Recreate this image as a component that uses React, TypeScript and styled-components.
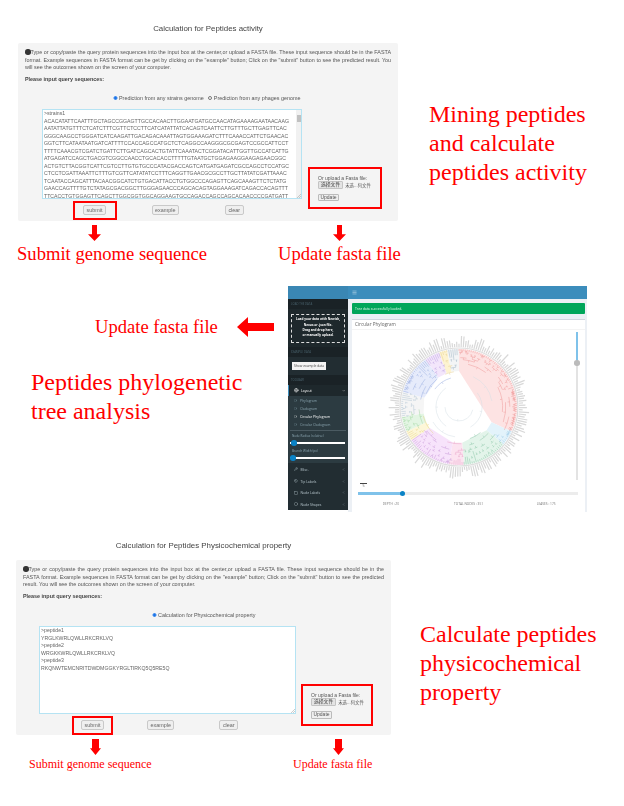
import styled, { createGlobalStyle } from 'styled-components';
import { Circle, Globe, Menu, Square, Tags, Wrench, ChevronDown, ChevronLeft } from 'lucide-react';

const GlobalStyle = createGlobalStyle`
  html, body {
    margin: 0;
    background: #fff;
  }
  * {
    box-sizing: border-box;
  }
`;

const SANS = `"Liberation Sans", "Noto Sans CJK SC", Arial, sans-serif`;
const SERIF = `"Liberation Serif", "Times New Roman", serif`;

const STRAINS = `>strains1
ACACATATTCAATTTGCTAGCCGGAGTTGCCACAACTTGGAATGATGCCAACATAGAAAAGAATAACAAG
AATATTATGTTTCTCATCTTTCGTTCTCCTTCATCATATTATCACAGTCAATTCTTGTTTGCTTGAGTTCAC
GGGCAAGCCTGGGATCATCAAGATTGACAGACAAATTAGTGGAAAGATCTTTCAAACCATTCTGAACAC
GGTCTTCATAATAATGATCATTTTCCACCAGCCATGCTCTCAGGCCAAGGGCGCGAGTCCGCCATTCCT
TTTTCAAACGTCGATCTGATTCTTGATCAGCACTGTATTCAAATACTCGGATACATTGGTTGCCATCATTG
ATGAGATCCAGCTGACGTCGGCCAACCTGCACACCTTTTTGTAATGCTGGAGAAGGAAGAGAACGGC
ACTGTCTTACGGTCATTCGTCCTTGTGTGCCCATACGACCAGTCATGATGAGATCGCCAGCCTCCATGC
CTCCTCGATTAAATTCTTTGTCGTTCATATATCCTTTCAGGTTGAACGCGCCTTGCTTATATCGATTAAAC
TCAATACCAGCATTTACAACGGCATCTGTGACATTACCTGTGGCCCAGAGTTCAGCAAAGTTCTCTATG
GAACCAGTTTTGTCTATAGCGACGGCTTGGGAGAACCCAGCACAGTAGGAAAGATCAGACCACAGTTT
TTCACCTGTGGAGTTCAGCTTGGCGGTGGCAGGAAGTGCCAGACCAGCCAGCACAACCCCGATGATT`;

const PEPTIDES = `>peptide1
YRGLKWRLQWLLRKCRKLVQ
>peptide2
WRGKKWRLQWLLRKCRKLVQ
>peptide3
RKQNWTEMCNRITDWDMGGKYRGLTIRKQ5Q5RE5Q`;

const Page = styled.div`
  width: 624px;
  height: 806px;
  overflow: hidden;
  display: flex;
  flex-direction: column;
`;

const Row = styled.section<{ $top: number; $height: number }>`
  display: flex;
  flex: none;
  margin-top: ${(p) => p.$top}px;
  height: ${(p) => p.$height}px;
`;

const Column = styled.div<{ $left: number; $width: number }>`
  margin-left: ${(p) => p.$left}px;
  width: ${(p) => p.$width}px;
  flex: none;
`;

const Title = styled.h3`
  margin: 0 0 7px;
  height: 14px;
  text-align: center;
  font: 400 7.9px/14px ${SANS};
  color: #444;
  filter: blur(0.25px);
`;

const Panel = styled.div<{ $height: number }>`
  height: ${(p) => p.$height}px;
  background: #f4f4f4;
  border-radius: 2px;
  padding: 6px 7px 0;
  font-family: ${SANS};
  color: #555;
  filter: blur(0.25px);
`;

const Intro = styled.p`
  margin: 0;
  font-size: 5.4px;
  line-height: 7.6px;
  text-align: justify;
`;

const InfoDot = styled.span`
  display: inline-block;
  width: 5.5px;
  height: 5.5px;
  border-radius: 50%;
  background: #333;
  vertical-align: -0.5px;
`;

const QueryLabel = styled.p`
  margin: 3.5px 0 0;
  font-size: 5.4px;
  line-height: 8px;
  font-weight: 700;
  color: #444;
`;

const Radios = styled.div<{ $left: number }>`
  display: flex;
  align-items: center;
  gap: 4px;
  height: 8px;
  margin: 10.5px 0 7.5px ${(p) => p.$left}px;
  font-size: 5.4px;
`;

const RadioOption = styled.label`
  display: flex;
  align-items: center;
  gap: 1.5px;

  input {
    margin: 0;
    width: 4.5px;
    height: 4.5px;
    accent-color: #1a73e8;
  }
`;

const WorkArea = styled.div`
  display: flex;
  align-items: flex-start;
`;

const InputColumn = styled.div<{ $indent: number; $width: number }>`
  margin-left: ${(p) => p.$indent}px;
  width: ${(p) => p.$width}px;
  flex: none;
`;

const SequenceBox = styled.div<{ $height: number }>`
  position: relative;
  height: ${(p) => p.$height}px;
  overflow: hidden;
  background: #fff;
  border: 1px solid #b5e3f3;
  padding: 0 0 0 1px;
  font-size: 5.2px;
  line-height: 7.5px;
  white-space: pre;
  color: #666;
`;

const ScrollTrack = styled.div`
  position: absolute;
  top: 0;
  right: 0;
  bottom: 0;
  width: 5px;
  background: #f1f1f1;

  &::before {
    content: '';
    position: absolute;
    top: 5px;
    left: 0.5px;
    width: 4px;
    height: 7px;
    background: #c1c1c1;
  }
`;

const Grip = styled.svg`
  position: absolute;
  right: 0;
  bottom: 0;
`;

const ButtonRow = styled.div<{ $indent: number }>`
  display: flex;
  align-items: center;
  height: 19px;
  margin: 1.5px 0 0 ${(p) => p.$indent}px;
`;

const Highlight = styled.div<{ $width: number }>`
  width: ${(p) => p.$width}px;
  height: 19px;
  border: 2px solid #f00;
  display: flex;
  align-items: center;
  justify-content: center;
`;

const FormButton = styled.button<{ $left?: number }>`
  margin: 0 0 0 ${(p) => p.$left ?? 0}px;
  height: 10px;
  padding: 0 2.5px;
  font: 400 5.4px/8px ${SANS};
  color: #666;
  background: #efefef;
  border: 1px solid #c9c9c9;
  border-radius: 2px;
`;

const UploadBox = styled.div<{ $top: number; $left: number; $width: number }>`
  margin: ${(p) => p.$top}px 0 0 ${(p) => p.$left}px;
  width: ${(p) => p.$width}px;
  height: 42px;
  flex: none;
  border: 2px solid #f00;
  padding: 6px 0 0 8px;
  font-size: 5px;
  color: #555;
`;

const UploadCaption = styled.div`
  line-height: 6px;
`;

const FileLine = styled.div`
  display: flex;
  align-items: center;
  gap: 2px;
  height: 8px;
  margin: 0 0 5px;
  font-size: 4.4px;
`;

const FileButton = styled.span`
  height: 8px;
  padding: 0 2px;
  font-size: 4.8px;
  line-height: 6px;
  background: #e4e4e4;
  border: 1px solid #c4c4c4;
  border-radius: 1px;
  color: #333;
`;

const UpdateButton = styled.span`
  display: block;
  width: 21px;
  height: 7.5px;
  line-height: 5.6px;
  text-align: center;
  background: #efefef;
  border: 1px solid #bbb;
  border-radius: 1px;
`;

const Callouts = styled.div`
  position: relative;
  height: 46px;
`;

const Callout = styled.div<{ $x: number; $size: number; $arrowX: number; $pad: number }>`
  position: absolute;
  top: 0;
  left: ${(p) => p.$x}px;
  padding-top: ${(p) => p.$pad}px;
  font: 400 ${(p) => p.$size}px/20px ${SERIF};
  color: #f00;
  white-space: nowrap;

  svg {
    position: absolute;
    top: 3.5px;
    left: ${(p) => p.$arrowX}px;
  }
`;

const BigNote = styled.h2<{ $left: number; $top: number }>`
  margin: ${(p) => p.$top}px 0 0 ${(p) => p.$left}px;
  font: 400 24px/29px ${SERIF};
  color: #f00;
`;

const ArrowRow = styled.div`
  display: flex;
  align-items: center;
  height: 22px;
  margin: 30px 0 0 95px;
  font: 400 18.6px/22px ${SERIF};
  color: #f00;
  gap: 19px;
`;

/* circular phylogram screenshot */
const Shot = styled.div`
  width: 299px;
  height: 226px;
  flex: none;
  display: flex;
  flex-direction: column;
  font-family: "Open Sans", ${SANS};
  background: #ecf0f5;
  filter: blur(0.35px);
`;

const ShotHeader = styled.div`
  height: 13px;
  flex: none;
  display: flex;
  background: #3c8dbc;
`;

const ShotLogo = styled.div`
  width: 60px;
  background: #3a87b4;
`;

const Burger = styled.div`
  display: flex;
  align-items: center;
  padding-left: 4px;
  color: #dfeef7;
`;

const ShotBody = styled.div`
  flex: 1;
  display: flex;
  min-height: 0;
`;

const Sidebar = styled.div`
  width: 60px;
  flex: none;
  background: #222d32;
  border-bottom: 2px solid #fff;
  display: flex;
  flex-direction: column;
  color: #b8c7ce;
  font-size: 3.4px;
`;

const SideHeading = styled.div`
  height: 10px;
  flex: none;
  display: flex;
  align-items: center;
  padding-left: 3px;
  background: #1a2226;
  color: #4b646f;
  font-size: 2.8px;
`;

const SideBlock = styled.div<{ $height: number; $align?: string; $dark?: boolean }>`
  height: ${(p) => p.$height}px;
  flex: none;
  display: flex;
  align-items: center;
  justify-content: ${(p) => p.$align ?? 'flex-start'};
  padding: 0 3px;
  background: ${(p) => (p.$dark ? '#1e282c' : '#222d32')};
`;

const DropZone = styled.div`
  width: 54px;
  height: 29px;
  border: 1px dashed #ddd;
  display: flex;
  flex-direction: column;
  align-items: center;
  justify-content: center;
  color: #fff;
  font-size: 3.1px;
  line-height: 5.3px;
  font-weight: 700;
  text-align: center;
`;

const ExampleButton = styled.div`
  width: 34px;
  height: 8px;
  margin-left: 1px;
  background: #f4f4f4;
  color: #444;
  font-size: 3.3px;
  line-height: 8px;
  text-align: center;
`;

const MenuRow = styled.div<{ $active?: boolean; $height: number }>`
  height: ${(p) => p.$height}px;
  flex: none;
  display: flex;
  align-items: center;
  gap: 2.5px;
  padding: 0 3px 0 5px;
  background: ${(p) => (p.$active ? '#1e282c' : 'transparent')};
  border-left: 1px solid ${(p) => (p.$active ? '#3c8dbc' : 'transparent')};
  color: ${(p) => (p.$active ? '#fff' : '#b8c7ce')};
  font-size: 3.4px;

  span {
    flex: 1;
  }
`;

const SubMenu = styled.div`
  height: 36px;
  flex: none;
  background: #2c3b41;
`;

const SubRow = styled.div<{ $current?: boolean }>`
  height: 8px;
  display: flex;
  align-items: center;
  gap: 3px;
  padding-left: 6px;
  font-size: 3.4px;
  color: ${(p) => (p.$current ? '#fff' : '#8aa4af')};
`;

const SideDivider = styled.div`
  height: 1px;
  margin: 2px 2px 0;
  background: #4b5b62;
`;

const SliderGroup = styled.div`
  height: 31px;
  flex: none;
  background: #2c3b41;
  padding: 1px 0 0 4px;
  color: #8aa4af;
  font-size: 3.1px;
`;

const SliderCaption = styled.div`
  height: 6px;
  line-height: 6px;
`;

const WhiteTrack = styled.div<{ $thumb: number }>`
  position: relative;
  height: 2.5px;
  margin: 2.5px 3px 4px -2px;
  background: #fff;

  &::before {
    content: '';
    position: absolute;
    top: -1.5px;
    left: ${(p) => p.$thumb}px;
    width: 5.5px;
    height: 5.5px;
    border-radius: 50%;
    background: #0a83c6;
  }
`;

const ShotMain = styled.div`
  flex: 1;
  min-width: 0;
  padding: 4px 2px 0 4px;
  display: flex;
  flex-direction: column;
`;

const Alert = styled.div`
  height: 11px;
  flex: none;
  padding-left: 3px;
  background: #00a65a;
  border-radius: 1px;
  color: #dff5ea;
  font-size: 3.4px;
  line-height: 11px;
`;

const Card = styled.div`
  flex: 1;
  margin-top: 5px;
  background: #fff;
  border-top: 1px solid #d2d6de;
  display: flex;
  flex-direction: column;
  min-height: 0;
`;

const CardTitle = styled.div`
  height: 10px;
  flex: none;
  padding-left: 3px;
  color: #666;
  font-size: 4.6px;
  line-height: 9px;
  border-bottom: 1px solid #f4f4f4;
`;

const TreeRow = styled.div`
  height: 150px;
  flex: none;
  display: flex;
  justify-content: space-between;
  padding: 0 7px 0 27px;
`;

const VerticalSlider = styled.div`
  position: relative;
  width: 2.5px;
  height: 148px;
  margin-top: 2px;
  background: #e3e3e3;

  &::before {
    content: '';
    position: absolute;
    top: 0;
    left: 0;
    right: 0;
    height: 30px;
    background: #7fc2ea;
  }
  &::after {
    content: '';
    position: absolute;
    top: 28px;
    left: -1.5px;
    width: 5.5px;
    height: 5.5px;
    border-radius: 50%;
    background: #bbb;
  }
`;

const ZoomMark = styled.div`
  width: 7px;
  margin: 3px 0 0 8px;
  border-top: 1.5px solid #444;
  color: #777;
  font-size: 3px;
  line-height: 4px;
  text-align: center;
`;

const DepthSlider = styled.div`
  position: relative;
  height: 2.5px;
  margin: 4px 7px 0 6px;
  background: #ececec;

  &::before {
    content: '';
    position: absolute;
    top: 0;
    left: 0;
    width: 44px;
    height: 100%;
    background: #7fc2ea;
  }
  &::after {
    content: '';
    position: absolute;
    top: -1.5px;
    left: 41.5px;
    width: 5.5px;
    height: 5.5px;
    border-radius: 50%;
    background: #0a83c6;
  }
`;

const Stats = styled.div`
  display: grid;
  grid-template-columns: 1fr 1fr 1fr;
  margin-top: 7px;
  color: #777;
  font-size: 3.2px;
  text-align: center;
`;

const ARROW_RED = '#f00';

const DownArrow = ({ w, h, shaft }: { w: number; h: number; shaft: number }) => (
  <svg width={w} height={h} viewBox={`0 0 ${w} ${h}`}>
    <path
      fill={ARROW_RED}
      d={`M${(w - shaft) / 2} 0H${(w + shaft) / 2}V${h * 0.58}H${w}L${w / 2} ${h}L0 ${h * 0.58}H${(w - shaft) / 2}Z`}
    />
  </svg>
);

const LeftArrow = () => (
  <svg width="37" height="20" viewBox="0 0 37 20">
    <path fill={ARROW_RED} d="M0 10L11 0V6H37V14H11V20Z" />
  </svg>
);

const seeded = (start: number) => {
  let s = start;
  return () => {
    s = (s * 16807) % 2147483647;
    return (s - 1) / 2147483646;
  };
};

// clades clockwise from 12 o'clock: end angle, wedge fill, branch colour
const CLADES: [number, string, string][] = [
  [115, '#fde3e3', '#ef9a9a'],
  [130, '#e3f3fb', '#9ccbe6'],
  [175, '#e3f4ea', '#8cc7a8'],
  [190, '#fce3f0', '#e8a4c8'],
  [235, '#f7e3fb', '#c99ad8'],
  [245, '#fdf6d8', '#e6d68c'],
  [260, '#e3f5e3', '#a3d6a3'],
  [285, '#f5f5f5', '#b5c6d4'],
  [325, '#e6ebfb', '#9aaee0'],
  [340, '#f3e6fb', '#bba0e0'],
  [348, '#fdf3d0', '#e6d090'],
  [360, '#f3f5f6', '#9fb4c4'],
];

const polar = (r: number, deg: number) => {
  const a = ((deg - 90) * Math.PI) / 180;
  return `${(80 + r * Math.cos(a)).toFixed(2)} ${(80 + r * Math.sin(a)).toFixed(2)}`;
};

const cladeColor = (deg: number) => CLADES.find((c) => deg <= c[0]) ?? CLADES[0];

const PhyloTree = () => {
  const rand = seeded(4211);
  const leaves = 175;
  const step = 360 / leaves;
  const OUTER = 58;
  const ticks: string[] = [];
  for (let i = 0; i < leaves; i++) {
    const deg = i * step;
    ticks.push(`M${polar(OUTER + 2, deg)}L${polar(OUTER + 5 + rand() * 9, deg)}`);
  }
  const branches: { d: string; color: string }[] = [];
  const grow = (from: number, to: number, r: number): number => {
    const mid = ((from + to) / 2) * step;
    const color = to - from > 40 ? '#d5dfe5' : cladeColor(mid)[2];
    if (to - from < 1) {
      branches.push({ d: `M${polar(r, from * step)}L${polar(OUTER, from * step)}`, color });
      return from * step;
    }
    const cut = from + Math.max(0, Math.floor((to - from) * (0.25 + rand() * 0.5)));
    const jump = to - from > 40 ? 6 + rand() * 5 : 1.5 + rand() * 5;
    const next = Math.min(OUTER - 2, r + jump);
    const a = grow(from, cut, next);
    const b = grow(Math.min(cut + 1, to), to, next);
    branches.push({ d: `M${polar(r, a)}A${r} ${r} 0 ${b - a > 180 ? 1 : 0} 1 ${polar(r, b)}`, color });
    const centre = (a + b) / 2;
    branches.push({ d: `M${polar(r - 2, centre)}L${polar(r, centre)}`, color });
    return centre;
  };
  grow(0, leaves - 1, 14);
  let start = 0;
  return (
    <svg width="160" height="150" viewBox="0 3 160 150">
      <path d={ticks.join('')} stroke="#d8d8d8" strokeWidth="1.2" fill="none" />
      {CLADES.map(([end, fill]) => {
        const from = start;
        start = end;
        const inner = 36;
        return (
          <path
            key={end}
            fill={fill}
            d={`M${polar(inner, from)}L${polar(OUTER, from)}A${OUTER} ${OUTER} 0 ${end - from > 180 ? 1 : 0} 1 ${polar(OUTER, end)}L${polar(inner, end)}Z`}
          />
        );
      })}
      <circle cx="80" cy="80" r="59" fill="none" stroke="#ddd" strokeWidth="1.2" />
      {branches.map((b, i) => (
        <path key={i} d={b.d} stroke={b.color} strokeWidth="0.5" fill="none" />
      ))}
    </svg>
  );
};

type SequencePanelProps = {
  panelHeight: number;
  intro: number;
  radioLeft: number;
  radios: { label: string; checked: boolean }[];
  boxWidth: number;
  boxHeight: number;
  text: string;
  scrolls: boolean;
  highlightIndent: number;
  highlightWidth: number;
  exampleLeft: number;
  clearLeft: number;
  uploadTop: number;
  uploadLeft: number;
  uploadWidth: number;
};

const SequencePanel = (p: SequencePanelProps) => (
  <Panel $height={p.panelHeight}>
    <Intro>
      <InfoDot />
      Type or copy/paste the query protein sequences into the input box at the center,or upload a
      FASTA file. These input sequence should be in the FASTA format. Example sequences in FASTA
      format can be get by clicking on the "example" button; Click on the "submit" button to see the
      predicted result. You will see the outcomes shown on the screen of your computer.
    </Intro>
    <QueryLabel>Please input query sequences:</QueryLabel>
    <Radios $left={p.radioLeft}>
      {p.radios.map((r) => (
        <RadioOption key={r.label}>
          <input type="radio" name={p.text.slice(0, 6)} defaultChecked={r.checked} />
          {r.label}
        </RadioOption>
      ))}
    </Radios>
    <WorkArea>
      <InputColumn $indent={p.intro} $width={p.boxWidth}>
        <SequenceBox $height={p.boxHeight}>
          {p.text}
          {p.scrolls && <ScrollTrack />}
          <Grip width="5" height="5" viewBox="0 0 5 5">
            <path d="M1 5L5 1M3 5L5 3" stroke="#aaa" strokeWidth="0.6" />
          </Grip>
        </SequenceBox>
        <ButtonRow $indent={p.highlightIndent}>
          <Highlight $width={p.highlightWidth}>
            <FormButton>submit</FormButton>
          </Highlight>
          <FormButton $left={p.exampleLeft}>example</FormButton>
          <FormButton $left={p.clearLeft}>clear</FormButton>
        </ButtonRow>
      </InputColumn>
      <UploadBox $top={p.uploadTop} $left={p.uploadLeft} $width={p.uploadWidth}>
        <UploadCaption>Or upload a Fasta file:</UploadCaption>
        <FileLine>
          <FileButton>选择文件</FileButton>
          未选...何文件
        </FileLine>
        <UpdateButton>Update</UpdateButton>
      </UploadBox>
    </WorkArea>
  </Panel>
);

const TreeShot = () => (
  <Shot>
    <ShotHeader>
      <ShotLogo />
      <Burger>
        <Menu size={5} />
      </Burger>
    </ShotHeader>
    <ShotBody>
      <Sidebar>
        <SideHeading>LOAD THE DATA</SideHeading>
        <SideBlock $height={38} $align="center" $dark>
          <DropZone>
            <div>Load your data with Newick,</div>
            <div>Nexus or .json file.</div>
            <div>Drag and drop here,</div>
            <div>or manually upload.</div>
          </DropZone>
        </SideBlock>
        <SideHeading>EXAMPLE DATA</SideHeading>
        <SideBlock $height={18}>
          <ExampleButton>Show example data</ExampleButton>
        </SideBlock>
        <SideHeading>TOOLBAR</SideHeading>
        <MenuRow $active $height={11}>
          <Globe size={4.5} />
          <span>Layout</span>
          <ChevronDown size={3.5} />
        </MenuRow>
        <SubMenu>
          <SubRow>
            <Circle size={3} />
            Phylogram
          </SubRow>
          <SubRow>
            <Circle size={3} />
            Cladogram
          </SubRow>
          <SubRow $current>
            <Circle size={3} />
            Circular Phylogram
          </SubRow>
          <SubRow>
            <Circle size={3} />
            Circular Cladogram
          </SubRow>
          <SideDivider />
        </SubMenu>
        <SliderGroup>
          <SliderCaption>Node Radius (relative)</SliderCaption>
          <WhiteTrack $thumb={1} />
          <SliderCaption>Branch Width (px)</SliderCaption>
          <WhiteTrack $thumb={0} />
        </SliderGroup>
        <MenuRow $height={12}>
          <Wrench size={4} />
          <span>Misc.</span>
          <ChevronLeft size={3} />
        </MenuRow>
        <MenuRow $height={12}>
          <Tags size={4} />
          <span>Tip Labels</span>
          <ChevronLeft size={3} />
        </MenuRow>
        <MenuRow $height={11}>
          <Square size={4} />
          <span>Node Labels</span>
          <ChevronLeft size={3} />
        </MenuRow>
        <MenuRow $height={12}>
          <Circle size={4} />
          <span>Node Shapes</span>
          <ChevronLeft size={3} />
        </MenuRow>
      </Sidebar>
      <ShotMain>
        <Alert>Tree data successfully loaded.</Alert>
        <Card>
          <CardTitle>Circular Phylogram</CardTitle>
          <TreeRow>
            <PhyloTree />
            <VerticalSlider />
          </TreeRow>
          <ZoomMark>%</ZoomMark>
          <DepthSlider />
          <Stats>
            <div>DEPTH : 20</div>
            <div>TOTAL NODES : 351</div>
            <div>LEAVES : 175</div>
          </Stats>
        </Card>
      </ShotMain>
    </ShotBody>
  </Shot>
);

const App = () => (
  <Page>
    <GlobalStyle />
    <Row $top={22} $height={242}>
      <Column $left={18} $width={380}>
        <Title>Calculation for Peptides activity</Title>
        <SequencePanel
          panelHeight={178}
          intro={17}
          radioLeft={88}
          radios={[
            { label: 'Prediction from any strains genome', checked: true },
            { label: 'Prediction from any phages genome', checked: false },
          ]}
          boxWidth={260}
          boxHeight={90}
          text={STRAINS}
          scrolls
          highlightIndent={30.5}
          highlightWidth={44}
          exampleLeft={35}
          clearLeft={46}
          uploadTop={57.5}
          uploadLeft={6}
          uploadWidth={74}
        />
        <Callouts>
          <Callout $x={-1} $size={18.6} $arrowX={71} $pad={23}>
            <DownArrow w={13} h={16} shaft={5} />
            Submit genome sequence
          </Callout>
          <Callout $x={260} $size={18.6} $arrowX={55} $pad={23}>
            <DownArrow w={13} h={16} shaft={5} />
            Update fasta file
          </Callout>
        </Callouts>
      </Column>
      <BigNote $left={31} $top={78}>
        Mining peptides
        <br />
        and calculate
        <br />
        peptides activity
      </BigNote>
    </Row>
    <Row $top={22} $height={226}>
      <Column $left={0} $width={288}>
        <ArrowRow>
          Update fasta file
          <LeftArrow />
        </ArrowRow>
        <BigNote $left={31} $top={30}>
          Peptides phylogenetic
          <br />
          tree analysis
        </BigNote>
      </Column>
      <TreeShot />
    </Row>
    <Row $top={27} $height={240}>
      <Column $left={16} $width={375}>
        <Title>Calculation for Peptides Physicochemical property</Title>
        <SequencePanel
          panelHeight={175}
          intro={16}
          radioLeft={129}
          radios={[{ label: 'Calculation for Physicochemical property', checked: true }]}
          boxWidth={257}
          boxHeight={88}
          text={PEPTIDES}
          scrolls={false}
          highlightIndent={33}
          highlightWidth={41}
          exampleLeft={34}
          clearLeft={45}
          uploadTop={58}
          uploadLeft={5}
          uploadWidth={72}
        />
        <Callouts>
          <Callout $x={13} $size={12} $arrowX={61} $pad={19}>
            <DownArrow w={11} h={16} shaft={7} />
            Submit genome sequence
          </Callout>
          <Callout $x={277} $size={12} $arrowX={40} $pad={19}>
            <DownArrow w={11} h={16} shaft={7} />
            Update fasta file
          </Callout>
        </Callouts>
      </Column>
      <BigNote $left={29} $top={80.5}>
        Calculate peptides
        <br />
        physicochemical
        <br />
        property
      </BigNote>
    </Row>
  </Page>
);

export default App;
